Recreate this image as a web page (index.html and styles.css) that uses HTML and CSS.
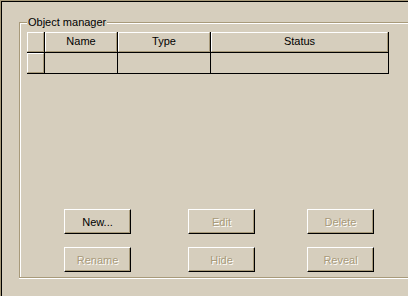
FILE: index.html
```html
<!DOCTYPE html>
<html lang="en">
<head>
    <meta charset="UTF-8">
    <title>Object manager</title>
    <link rel="stylesheet" href="styles.css">
</head>
<body>
    <div class="panel">
        <fieldset class="group">
            <legend>Object manager</legend>
            <div class="grid">
                <div class="cell fixed"></div>
                <div class="cell fixed">Name</div>
                <div class="cell fixed">Type</div>
                <div class="cell fixed">Status</div>
                <div class="cell fixed"></div>
                <div class="cell"></div>
                <div class="cell"></div>
                <div class="cell"></div>
            </div>
            <div class="buttons">
                <button class="btn">New...</button>
                <button class="btn" disabled>Edit</button>
                <button class="btn" disabled>Delete</button>
                <button class="btn" disabled>Rename</button>
                <button class="btn" disabled>Hide</button>
                <button class="btn" disabled>Reveal</button>
            </div>
        </fieldset>
    </div>
</body>
</html>
```

FILE: styles.css
```css
body {
    margin: 0;
    background-color: #d6cebd;
    font-family: 'Liberation Sans', Arial, sans-serif;
    font-size: 11px;
    color: #000;
    overflow: hidden;
}
/* sunken outer frame, cut off at the right and bottom */
.panel {
    box-sizing: border-box;
    width: 408px;
    height: 296px;
    border-top: 1px solid #a89a7a;
    border-left: 1px solid #a89a7a;
    box-shadow: inset 1px 1px 0 #000;
    padding-top: 15px;
    padding-left: 18px;
}
.group {
    box-sizing: border-box;
    width: 389px;
    height: 262px;
    margin: 0;
    padding: 3px 0 5px 7px;
    border: 1px solid #a89a7a;
    border-right: none;
    box-shadow: inset 1px 1px 0 #fff, 0 1px 0 #fff;
    display: flex;
    flex-direction: column;
}
.group legend {
    padding: 0 1px;
    line-height: 13px;
    background-color: #d6cebd;
}
.grid {
    align-self: flex-start;
    display: grid;
    grid-template-columns: 17px 72px 92px 177px;
    grid-auto-rows: 20px;
    gap: 1px;
    padding: 0 1px 1px 0;
    background-color: #000;
}
.cell {
    background-color: #d6cebd;
}
.cell.fixed {
    box-sizing: border-box;
    border-top: 1px solid #fff;
    border-left: 1px solid #fff;
    border-right: 1px solid #a89a7a;
    border-bottom: 1px solid #a89a7a;
    text-align: center;
    line-height: 17px;
}
.buttons {
    margin-top: auto;
    margin-left: 37px;
    display: grid;
    grid-template-columns: 124px 119px 67px;
    row-gap: 13px;
}
.btn {
    width: 67px;
    height: 25px;
    padding: 0;
    font: inherit;
    color: #000;
    background-color: #d6cebd;
    border: 1px solid;
    border-color: #fff #000 #000 #fff;
    box-shadow: inset -1px -1px 0 #a89a7a;
}
.btn:disabled {
    color: #a89a7a;
    text-shadow: 1px 1px 0 #fff;
}
```
